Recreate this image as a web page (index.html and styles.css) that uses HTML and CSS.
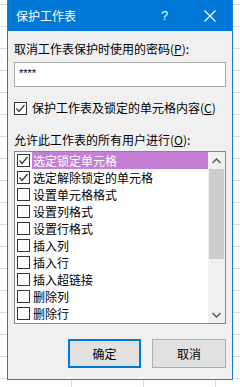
FILE: index.html
```html
<!DOCTYPE html>
<html lang="zh-CN">
<head>
<meta charset="utf-8">
<title>保护工作表</title>
<link rel="stylesheet" href="styles.css">
</head>
<body>
<div class="dialog">
  <div class="titlebar">
    <span class="title">保护工作表</span>
    <span class="tb-btn help">?</span>
    <span class="tb-btn close">
      <svg width="12" height="12" viewBox="0 0 12 12"><path d="M0.5 0.5 L11.5 11.5 M11.5 0.5 L0.5 11.5" stroke="#fff" stroke-width="1.1" fill="none"/></svg>
    </span>
  </div>
  <div class="content">
    <div class="label">取消工作表保护时使用的密码(<u>P</u>):</div>
    <div class="input">****</div>
    <div class="check-row">
      <span class="box checked"><svg width="11" height="11" viewBox="0 0 11 11"><path d="M1.5 5.5 L4 8.5 L9.5 2" stroke="#333" stroke-width="1.2" fill="none"/></svg></span>
      <span class="check-text">保护工作表及锁定的单元格内容(<u>C</u>)</span>
    </div>
    <div class="label label2">允许此工作表的所有用户进行(<u>O</u>):</div>
    <div class="listbox">
      <div class="items">
        <div class="item"><span class="box"><svg width="11" height="11" viewBox="0 0 11 11"><path d="M1.5 5.5 L4 8.5 L9.5 2" stroke="#333" stroke-width="1.2" fill="none"/></svg></span><span class="item-text selected">选定锁定单元格</span></div>
        <div class="item"><span class="box"><svg width="11" height="11" viewBox="0 0 11 11"><path d="M1.5 5.5 L4 8.5 L9.5 2" stroke="#333" stroke-width="1.2" fill="none"/></svg></span><span class="item-text">选定解除锁定的单元格</span></div>
        <div class="item"><span class="box"></span><span class="item-text">设置单元格格式</span></div>
        <div class="item"><span class="box"></span><span class="item-text">设置列格式</span></div>
        <div class="item"><span class="box"></span><span class="item-text">设置行格式</span></div>
        <div class="item"><span class="box"></span><span class="item-text">插入列</span></div>
        <div class="item"><span class="box"></span><span class="item-text">插入行</span></div>
        <div class="item"><span class="box"></span><span class="item-text">插入超链接</span></div>
        <div class="item"><span class="box"></span><span class="item-text">删除列</span></div>
        <div class="item"><span class="box"></span><span class="item-text">删除行</span></div>
      </div>
      <div class="scrollbar">
        <div class="arrow"><svg width="9" height="6" viewBox="0 0 9 6"><path d="M0.5 5 L4.5 1 L8.5 5" stroke="#505050" stroke-width="1.3" fill="none"/></svg></div>
        <div class="thumb"></div>
        <div class="track"></div>
        <div class="arrow"><svg width="9" height="6" viewBox="0 0 9 6"><path d="M0.5 1 L4.5 5 L8.5 1" stroke="#505050" stroke-width="1.3" fill="none"/></svg></div>
      </div>
    </div>
    <div class="buttons">
      <span class="btn default">确定</span>
      <span class="btn">取消</span>
    </div>
  </div>
</div>
</body>
</html>
```

FILE: styles.css
```css
html, body {
  margin: 0;
  padding: 0;
}
body {
  width: 240px;
  height: 387px;
  overflow: hidden;
  background-color: #ffffff;
  background-image:
    linear-gradient(to right, #dadada 1px, transparent 1px),
    linear-gradient(to bottom, #dadada 1px, transparent 1px);
  background-size: 72px 100%, 100% 22px;
  background-position: 71px 0, 0 4px;
  font-family: "Noto Sans CJK SC", "Noto Sans", sans-serif;
  font-size: 12px;
  color: #000;
}
.dialog {
  margin-left: 7px;
  width: 226px;
  height: 380px;
  box-sizing: border-box;
  border: 1px solid #1c7fd6;
  border-top: none;
  background: #f0f0f0;
  display: flex;
  flex-direction: column;
}
.titlebar {
  height: 31px;
  background: #0078d7;
  color: #fff;
  display: flex;
  align-items: center;
}
.title {
  flex: 1;
  padding-left: 8px;
  line-height: 16px;
}
.tb-btn {
  width: 45px;
  height: 31px;
  display: flex;
  align-items: center;
  justify-content: center;
}
.help {
  font-family: "Liberation Sans", sans-serif;
  font-size: 13px;
}
.content {
  padding: 10px 6px 0 6px;
  display: flex;
  flex-direction: column;
}
.label {
  line-height: 16px;
  height: 16px;
  white-space: nowrap;
}
.label2 {
  margin-top: 16px;
}
.input {
  margin-top: 5px;
  height: 25px;
  box-sizing: border-box;
  border: 1px solid #a8a8a8;
  background: #fff;
  padding-left: 4px;
  line-height: 20px;
  font-family: "Liberation Sans", sans-serif;
  font-size: 11px;
}
.check-row {
  margin-top: 13px;
  height: 16px;
  display: flex;
  align-items: center;
}
.box {
  width: 13px;
  height: 13px;
  box-sizing: border-box;
  border: 1px solid #333;
  background: #fff;
  flex: none;
  display: flex;
  align-items: center;
  justify-content: center;
}
.check-text {
  margin-left: 5px;
  line-height: 16px;
  white-space: nowrap;
}
.listbox {
  margin-top: 3px;
  height: 173px;
  box-sizing: border-box;
  border: 1px solid #828790;
  background: #fff;
  display: flex;
}
.items {
  flex: 1;
  display: flex;
  flex-direction: column;
}
.item {
  height: 17px;
  display: flex;
  align-items: center;
  padding-left: 2px;
}
.item-text {
  margin-left: 2px;
  flex: 1;
  height: 17px;
  line-height: 17px;
  padding-left: 1px;
  white-space: nowrap;
}
.item-text.selected {
  background: #c57fd6;
  color: #fff;
}
.scrollbar {
  width: 17px;
  display: flex;
  flex-direction: column;
  background: #f0f0f0;
}
.arrow {
  height: 17px;
  display: flex;
  align-items: center;
  justify-content: center;
}
.thumb {
  height: 90px;
  margin: 0 1px;
  background: #cdcdcd;
}
.track {
  flex: 1;
}
.buttons {
  margin-top: 15px;
  display: flex;
  justify-content: flex-end;
  gap: 11px;
}
.btn {
  width: 74px;
  height: 29px;
  box-sizing: border-box;
  border: 1px solid #adadad;
  background: #e1e1e1;
  display: flex;
  align-items: center;
  justify-content: center;
}
.btn.default {
  width: 73px;
  border: 2px solid #0078d7;
}
```
